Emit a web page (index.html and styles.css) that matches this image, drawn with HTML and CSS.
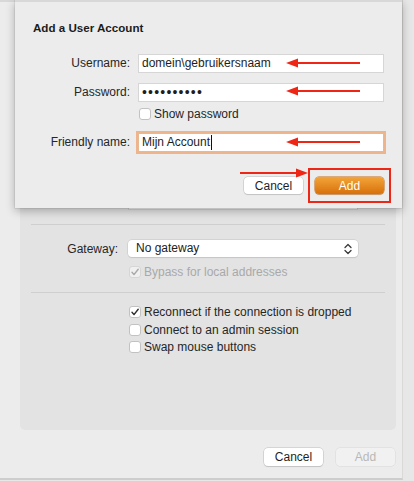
FILE: index.html
```html
<!DOCTYPE html>
<html>
<head>
<meta charset="utf-8">
<link rel="stylesheet" href="styles.css">
</head>
<body>
<div class="screen">
  <div class="window">
    <div class="groupbox">
      <div class="hidden-rows">
        <div class="row"><span class="label"></span><span class="field"></span></div>
        <div class="row"><span class="label"></span><span class="popup"></span></div>
        <div class="sep"></div>
        <div class="row"><span class="label"></span><span class="field"></span></div>
        <div class="row"><span class="label"></span><span class="field"></span></div>
      </div>
      <div class="sep"></div>
      <div class="row gateway">
        <span class="label">Gateway:</span>
        <span class="popup">No gateway
          <svg class="chev" width="8" height="12" viewBox="0 0 8 12"><path d="M1 4.5 L4 1.5 L7 4.5 M1 7.5 L4 10.5 L7 7.5" fill="none" stroke="#3a3a3a" stroke-width="1.3" stroke-linecap="round" stroke-linejoin="round"/></svg>
        </span>
      </div>
      <div class="check-row bypass disabled">
        <span class="cb checked"><svg width="12" height="12" viewBox="0 0 12 12"><path d="M3 6.3 L5 8.6 L9.2 3.2" fill="none" stroke="#a8a8a8" stroke-width="1.4" stroke-linecap="round" stroke-linejoin="round"/></svg></span>
        <span>Bypass for local addresses</span>
      </div>
      <div class="sep sep2"></div>
      <div class="checks">
        <div class="check-row">
          <span class="cb checked"><svg width="12" height="12" viewBox="0 0 12 12"><path d="M3 6.3 L5 8.6 L9.2 3.2" fill="none" stroke="#2e2e2e" stroke-width="1.4" stroke-linecap="round" stroke-linejoin="round"/></svg></span>
          <span>Reconnect if the connection is dropped</span>
        </div>
        <div class="check-row"><span class="cb"></span><span>Connect to an admin session</span></div>
        <div class="check-row"><span class="cb"></span><span>Swap mouse buttons</span></div>
      </div>
    </div>
    <div class="footer">
      <span class="btn">Cancel</span>
      <span class="btn disabled-btn">Add</span>
    </div>
  </div>

  <div class="sheet">
    <div class="sheet-title">Add a User Account</div>
    <div class="form">
      <span class="flabel">Username:</span>
      <span class="sfield">domein\gebruikersnaam</span>
      <span class="flabel">Password:</span>
      <span class="sfield dots">••••••••••</span>
      <span></span>
      <span class="check-row show-pw"><span class="cb"></span><span>Show password</span></span>
      <span class="flabel friendly-label">Friendly name:</span>
      <span class="sfield focused">Mijn Account<span class="caret"></span></span>
    </div>
    <div class="sheet-buttons">
      <span class="btn">Cancel</span>
      <span class="btn primary">Add</span>
    </div>
  </div>

  <svg class="arrow a1" width="76" height="10" viewBox="0 0 76 10"><path d="M10 5 H74" stroke="#ee2616" stroke-width="2"/><path d="M0 5 L12 0.5 L12 9.5 Z" fill="#ee2616"/></svg>
  <svg class="arrow a2" width="76" height="10" viewBox="0 0 76 10"><path d="M10 5 H74" stroke="#ee2616" stroke-width="2"/><path d="M0 5 L12 0.5 L12 9.5 Z" fill="#ee2616"/></svg>
  <svg class="arrow a3" width="76" height="10" viewBox="0 0 76 10"><path d="M10 5 H74" stroke="#ee2616" stroke-width="2"/><path d="M0 5 L12 0.5 L12 9.5 Z" fill="#ee2616"/></svg>
  <svg class="arrow a4" width="68" height="10" viewBox="0 0 68 10"><path d="M0 5 H58" stroke="#ee2616" stroke-width="2"/><path d="M68 5 L56 0.5 L56 9.5 Z" fill="#ee2616"/></svg>
  <div class="highlight"></div>
</div>
</body>
</html>
```

FILE: styles.css
```css
* { box-sizing: border-box; }
html, body { margin: 0; padding: 0; }
body {
  background: #e8e8e8;
  font-family: "Liberation Sans", Arial, sans-serif;
  font-size: 12px;
  color: #262626;
}
.screen {
  position: relative;
  width: 414px;
  height: 481px;
  overflow: hidden;
  background: #e7e7e7;
}
.window {
  width: 403px;
  height: 480px;
  background: #ececec;
  border-top: 2px solid #d8d8d8;
  border-bottom: 2px solid #cdcdcd;
  border-right: 1px solid #d9d9d9;
  padding: 10px 6px 12px 20px;
  display: flex;
  flex-direction: column;
}
.groupbox {
  flex: 1;
  background: #e3e3e3;
  border-radius: 5px;
  padding-top: 10px;
  display: flex;
  flex-direction: column;
}
.hidden-rows {
  height: 188px;
  display: flex;
  flex-direction: column;
  justify-content: flex-end;
  gap: 10px;
}
.row {
  display: flex;
  align-items: center;
  height: 17px;
}
.label {
  width: 98px;
  text-align: right;
  margin-right: 10px;
  white-space: nowrap;
}
.field {
  width: 230px;
  height: 17px;
  background: #fff;
  border: 1px solid #d3d3d3;
}
.popup {
  position: relative;
  width: 230px;
  height: 17px;
  background: #fff;
  border-radius: 4px;
  box-shadow: 0 0 0 0.5px #c4c4c4, 0 1px 1px rgba(0,0,0,0.12);
  padding-left: 8px;
  line-height: 17px;
  color: #222;
}
.chev {
  position: absolute;
  right: 6px;
  top: 2.5px;
}
.sep {
  height: 1px;
  background: #cfcfcf;
  margin: 14px 11px 0 11px;
  flex: none;
}
.gateway { margin-top: 15px; }
.check-row {
  display: flex;
  align-items: center;
  height: 14px;
  white-space: nowrap;
}
.cb {
  width: 12px;
  height: 12px;
  flex: none;
  background: #fff;
  border: 1px solid #c2c2c2;
  border-radius: 3px;
  margin-right: 3px;
  position: relative;
}
.cb svg {
  position: absolute;
  left: -1px;
  top: -1px;
}
.bypass {
  margin-top: 8px;
  margin-left: 109px;
  color: #a9a9a9;
}
.bypass .cb {
  background: #f0f0f0;
  border-color: #d6d6d6;
}
.sep2 { margin-top: 13px; }
.checks {
  margin-top: 12px;
  margin-left: 109px;
  display: flex;
  flex-direction: column;
  gap: 3.5px;
}
.footer {
  margin-top: 18px;
  height: 18px;
  display: flex;
  justify-content: flex-end;
  gap: 13px;
  padding-right: 1px;
}
.btn {
  width: 59px;
  height: 18px;
  display: flex;
  align-items: center;
  justify-content: center;
  background: #fff;
  border-radius: 4px;
  box-shadow: 0 0 0 0.5px #bdbdbd, 0 1px 1px rgba(0,0,0,0.15);
  color: #1f1f1f;
}
.disabled-btn {
  background: #f1f1f1;
  color: #b8b8b8;
  box-shadow: 0 0 0 0.5px #d8d8d8;
}

/* sheet overlay */
.sheet {
  position: absolute;
  left: 15px;
  top: 0;
  width: 387px;
  height: 208px;
  background: #ececec;
  border-top: 2px solid #d8d8d8;
  box-shadow: 0 3px 9px rgba(0,0,0,0.28), 0 0 0 0.5px rgba(0,0,0,0.12);
  padding: 18px 18px 0 18px;
}
.sheet-title {
  font-weight: bold;
  font-size: 11.6px;
  line-height: 16px;
  color: #1c1c1c;
}
.form {
  margin-top: 18px;
  display: grid;
  grid-template-columns: 97px 246px;
  column-gap: 8px;
  align-items: center;
}
.flabel {
  text-align: right;
  white-space: nowrap;
  height: 19px;
  line-height: 19px;
}
.sfield {
  height: 19px;
  line-height: 17px;
  background: #fff;
  border: 1px solid #d6d6d6;
  padding-left: 3px;
  color: #1e1e1e;
  white-space: nowrap;
}
.form > :nth-child(3), .form > :nth-child(4) { margin-top: 10px; }
.dots {
  font-size: 14px;
  letter-spacing: 1.2px;
  line-height: 17px;
}
.show-pw {
  margin-top: 5px;
  margin-left: 1px;
  height: 14px;
}
.show-pw .cb { margin-right: 3px; }
.friendly-label, .focused { margin-top: 12px; }
.focused {
  border-color: #e8b894;
  box-shadow: 0 0 0 2px #eeb48c;
  display: flex;
  align-items: center;
}
.caret {
  display: inline-block;
  width: 1px;
  height: 15px;
  background: #111;
  margin-left: 1px;
}
.sheet-buttons {
  margin-top: 25px;
  display: flex;
  justify-content: flex-end;
  gap: 12px;
}
.sheet-buttons .btn { height: 17px; }
.primary {
  width: 69px;
  background: linear-gradient(#f2a53a, #d8700a);
  color: #fff;
  box-shadow: 0 0 0 0.5px #c9680c, 0 1px 1px rgba(0,0,0,0.15);
}

/* annotations */
.arrow { position: absolute; }
.a1 { left: 286px; top: 58px; }
.a2 { left: 286px; top: 86px; }
.a3 { left: 286px; top: 137px; }
.a4 { left: 240px; top: 168px; }
.highlight {
  position: absolute;
  left: 308px;
  top: 168px;
  width: 83px;
  height: 35px;
  border: 2px solid #ee2616;
}
```
